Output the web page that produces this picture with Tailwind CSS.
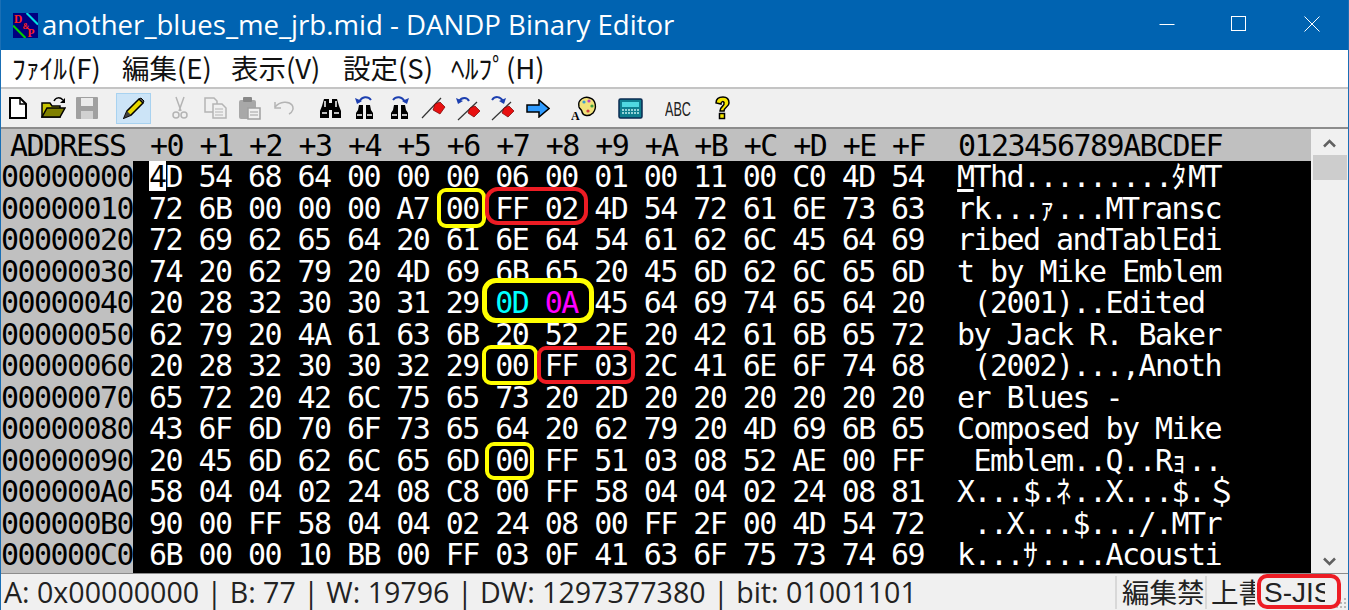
<!DOCTYPE html>
<html lang="ja">
<head>
    <meta charset="UTF-8">
    <meta name="viewport" content="width=device-width, initial-scale=1.0">
    <title>DANDP Binary Editor</title>
    <script src="https://cdn.jsdelivr.net/npm/@tailwindcss/browser@4"></script>
</head>
<body class="w-[1349px] h-[610px] overflow-hidden bg-[#f0f0f0]">
<div class="relative w-[1349px] h-[610px] flex flex-col border-x border-[#1a6fb5] overflow-hidden">

    <!-- title bar -->
    <div class="h-[50px] shrink-0 bg-[#0063b1] flex items-center text-white pl-[12px]">
        <svg class="w-[25px] h-[25px] shrink-0" viewBox="0 0 24 24">
            <rect width="24" height="24" fill="#000080"/>
            <path d="M13 0 L24 11" stroke="#00e0e0" stroke-width="2"/>
            <path d="M0 12 L12 24" stroke="#00d000" stroke-width="2"/>
            <text x="1" y="10" font-size="11" font-weight="bold" fill="#ff2020" font-family="Liberation Serif">D</text>
            <text x="9" y="15" font-size="8" font-weight="bold" fill="#ff2020" font-family="Liberation Serif">&amp;</text>
            <text x="14" y="23" font-size="11" font-weight="bold" fill="#ff2020" font-family="Liberation Serif">P</text>
        </svg>
        <span class="ml-[4px] text-[27.6px] leading-none font-['Open_Sans',sans-serif] whitespace-pre">another_blues_me_jrb.mid - DANDP Binary Editor</span>
        <div class="ml-auto mb-[2px] flex items-center">
            <svg class="w-[16px] h-[16px]" viewBox="0 0 16 16"><path d="M0.5 8.5H15.5" stroke="white" stroke-width="1"/></svg>
            <svg class="ml-[56px] w-[16px] h-[16px]" viewBox="0 0 16 16"><rect x="0.5" y="0.5" width="14" height="14" fill="none" stroke="white"/></svg>
            <svg class="ml-[57px] mr-[28px] w-[16px] h-[16px]" viewBox="0 0 16 16"><path d="M0.5 0.5L15.5 15.5M15.5 0.5L0.5 15.5" stroke="white"/></svg>
        </div>
    </div>

    <!-- menu -->
    <div class="h-[37px] shrink-0 bg-white flex items-center pb-[2px] text-[27.5px] text-[#111] font-['Noto_Sans_CJK_JP',sans-serif] whitespace-pre leading-none">
        <span class="w-[121px] pl-[11px]">ﾌｧｲﾙ(F)</span>
        <span class="w-[109px]">編集(E)</span>
        <span class="w-[112px]">表示(V)</span>
        <span class="w-[108px]">設定(S)</span>
        <span>ﾍﾙﾌﾟ(H)</span>
    </div>

    <!-- toolbar -->
    <div class="h-[42px] shrink-0 bg-[#f0f0f0] border-t-2 border-b-2 border-t-[#c4c4c4] border-b-[#8c8c8c] flex items-center">
        <svg class="ml-[7px] w-[20px] h-[24px]" viewBox="0 0 20 24"><path d="M2 2H12L18 8V22H2Z" fill="white" stroke="black" stroke-width="2"/><path d="M12 2V8H18" fill="none" stroke="black" stroke-width="1.5"/></svg>
        <svg class="ml-[13px] w-[25px] h-[24px]" viewBox="0 0 25 24"><path d="M1 7H9L11 10H19V21H1Z" fill="#c8c400" stroke="black" stroke-width="1.5"/><path d="M1 21L6 12H24L19 21Z" fill="#808000" stroke="black" stroke-width="1.5"/><path d="M13 5C15 1 19 1 22 4" fill="none" stroke="black" stroke-width="1.5"/><path d="M24 2V7H19Z" fill="black"/></svg>
        <svg class="ml-[10px] w-[22px] h-[22px]" viewBox="0 0 22 22"><rect x="0" y="0" width="22" height="22" rx="1" fill="#a0a0a0"/><rect x="5" y="1" width="12" height="8" fill="#ebebeb"/><rect x="5" y="14" width="12" height="8" fill="#d0d0d0"/></svg>
        <div class="ml-[18px] w-[35px] h-[31px] bg-[#cce4f7] border border-[#a8d2f0] flex items-center justify-center">
            <svg class="w-[22px] h-[22px]" viewBox="0 0 22 22"><path d="M1 21L4 14L16 2L20 6L8 18Z" fill="#e8d800" stroke="black" stroke-width="1.5"/><path d="M16 2L20 6L21 4L18 1Z" fill="#505050" stroke="black"/><path d="M1 21L4 14L8 18Z" fill="#404040"/></svg>
        </div>
        <svg class="ml-[21px] w-[16px] h-[24px]" viewBox="0 0 16 24" fill="none" stroke="#b4b4b4" stroke-width="1.5"><path d="M4 1L9 15M12 1L7 15"/><circle cx="4" cy="19" r="3"/><circle cx="12" cy="19" r="3"/></svg>
        <svg class="ml-[16px] w-[23px] h-[22px]" viewBox="0 0 23 22" fill="#f0f0f0" stroke="#b4b4b4" stroke-width="1.5"><path d="M1 1H10L13 4V15H1Z"/><path d="M9 7H18L22 11V21H9Z"/><path d="M11 12H19M11 15H19M11 18H19" stroke-width="1"/></svg>
        <svg class="ml-[11px] w-[23px] h-[23px]" viewBox="0 0 23 23"><rect x="1" y="3" width="17" height="19" rx="2" fill="#a8a8a8"/><rect x="5" y="0" width="9" height="5" rx="1" fill="#888"/><path d="M10 11H22V22H10Z" fill="#f0f0f0" stroke="#a0a0a0" stroke-width="1.5"/><path d="M12 15H20M12 18H20" stroke="#a0a0a0"/></svg>
        <svg class="ml-[13px] w-[20px] h-[14px]" viewBox="0 0 20 14" fill="none" stroke="#b4b4b4" stroke-width="1.5"><path d="M1 6C6 0 15 0 18 4C20 7 19 11 15 13"/><path d="M1 1V7H7"/></svg>
        <svg class="ml-[25px] w-[23px] h-[21px]" viewBox="0 0 23 21"><path d="M3 8L5 1H10V20H1V13Z" fill="black"/><path d="M20 8L18 1H13V20H22V13Z" fill="black"/><rect x="9" y="5" width="5" height="7" fill="black"/><path d="M3 15H8M15 15H20M6 3V9M17 3V9" stroke="white" stroke-width="1.5"/></svg>
        <svg class="ml-[12px] w-[21px] h-[24px]" viewBox="0 0 21 24"><path d="M5 6C8 0 14 0 17 4" fill="none" stroke="#1c3fb0" stroke-width="2"/><path d="M1 2L3 8L8 5Z" fill="#1c3fb0"/><path d="M4 14L5 9H9V23H2V17Z" fill="black"/><path d="M17 14L16 9H12V23H19V17Z" fill="black"/><path d="M3 19H8M13 19H18" stroke="white" stroke-width="1.5"/></svg>
        <svg class="ml-[14px] w-[21px] h-[24px]" viewBox="0 0 21 24"><path d="M4 4C7 0 13 0 16 6" fill="none" stroke="#1c3fb0" stroke-width="2"/><path d="M20 2L18 8L13 5Z" fill="#1c3fb0"/><path d="M4 14L5 9H9V23H2V17Z" fill="black"/><path d="M17 14L16 9H12V23H19V17Z" fill="black"/><path d="M3 19H8M13 19H18" stroke="white" stroke-width="1.5"/></svg>
        <svg class="ml-[11px] w-[25px] h-[22px]" viewBox="0 0 25 22"><path d="M1 21L20 1" stroke="#333" stroke-width="1.2"/><path d="M14 7L19 5L24 10L19 17L12 13Z" fill="#e81010" stroke="#700" stroke-width="0.7"/></svg>
        <svg class="ml-[10px] w-[25px] h-[25px]" viewBox="0 0 25 25"><path d="M2 24L21 6" stroke="#333" stroke-width="1.2"/><path d="M3 5C6 1 11 1 13 5" fill="none" stroke="#1c3fb0" stroke-width="2"/><path d="M0 2L2 8L7 5Z" fill="#1c3fb0"/><path d="M14 12L19 10L24 15L18 21L12 17Z" fill="#e81010" stroke="#700" stroke-width="0.7"/></svg>
        <svg class="ml-[9px] w-[25px] h-[25px]" viewBox="0 0 25 25"><path d="M2 24L21 6" stroke="#333" stroke-width="1.2"/><path d="M2 4C5 0 10 0 13 5" fill="none" stroke="#1c3fb0" stroke-width="2"/><path d="M16 2L14 8L9 5Z" fill="#1c3fb0"/><path d="M14 12L19 10L24 15L18 21L12 17Z" fill="#e81010" stroke="#700" stroke-width="0.7"/></svg>
        <svg class="ml-[11px] w-[24px] h-[19px]" viewBox="0 0 24 19"><path d="M1 6H13V1L23 9.500L13 18V13H1Z" fill="#2f9bff" stroke="black" stroke-width="1.5"/></svg>
        <svg class="ml-[21px] w-[26px] h-[26px]" viewBox="0 0 26 26"><path d="M8 12C6 4 14 1 19 3C25 5 26 13 22 18C18 22 12 21 11 17C11 14 9 15 8 12Z" fill="#f2e27a" stroke="black" stroke-width="1.4"/><circle cx="13" cy="7" r="1.600" fill="#3aa0d0"/><circle cx="18" cy="6" r="1.600" fill="#c040c0"/><circle cx="21" cy="11" r="1.600" fill="#40a040"/><circle cx="17" cy="16" r="1.600" fill="#d04040"/><text x="0" y="25" font-size="12" font-weight="bold" fill="black" font-family="Liberation Serif">A</text></svg>
        <svg class="ml-[21px] w-[25px] h-[21px]" viewBox="0 0 25 21"><rect x="1" y="1" width="23" height="19" rx="1.500" fill="#0f7f8f" stroke="#0a2a50" stroke-width="1.5"/><rect x="4" y="4" width="17" height="5" fill="#50d8e0"/><path d="M4 12H21M4 15H21" stroke="#c0f0f0" stroke-width="1.500" stroke-dasharray="2 1"/></svg>
        <span class="ml-[22px] w-[26px] text-[21px] leading-none text-[#222] font-['Liberation_Sans',sans-serif] scale-x-[0.6] origin-left whitespace-pre">ABC</span>
        <svg class="ml-[23px] w-[17px] h-[24px]" viewBox="0 0 17 24"><path d="M2 7C2 2 6 1 9 1C13 1 15 3 15 7C15 11 10 11 10 15H6C6 10 11 10 10 7C10 5 7 5 7 8Z" fill="#f5e500" stroke="black" stroke-width="1.500"/><rect x="5.500" y="17.500" width="5" height="5" fill="#f5e500" stroke="black" stroke-width="1.500"/></svg>
    </div>

    <!-- hex view -->
    <div class="flex-1 min-h-0 flex font-['DejaVu_Sans_Mono','Noto_Sans_CJK_JP',monospace] text-[30px] tracking-[-1.57px] whitespace-pre leading-[31.5px] border-b border-[#8c8c8c]">
        <div class="flex-1 min-w-0 flex flex-col overflow-hidden">
            <div class="h-[32px] shrink-0 bg-[#c0c0c0] text-black pl-[9px] leading-[33px]"><span class="inline-block w-[140px]">ADDRESS</span>+0 +1 +2 +3 +4 +5 +6 +7 +8 +9 +A +B +C +D +E +F  0123456789ABCDEF</div>
            <div class="flex-1 flex min-h-0">
                <div class="w-[132px] shrink-0 bg-[#c0c0c0] text-black flex flex-col">
                    <div class="h-[31.5px]">00000000</div>
                    <div class="h-[31.5px]">00000010</div>
                    <div class="h-[31.5px]">00000020</div>
                    <div class="h-[31.5px]">00000030</div>
                    <div class="h-[31.5px]">00000040</div>
                    <div class="h-[31.5px]">00000050</div>
                    <div class="h-[31.5px]">00000060</div>
                    <div class="h-[31.5px]">00000070</div>
                    <div class="h-[31.5px]">00000080</div>
                    <div class="h-[31.5px]">00000090</div>
                    <div class="h-[31.5px]">000000A0</div>
                    <div class="h-[31.5px]">000000B0</div>
                    <div class="h-[31.5px]">000000C0</div>
                </div>
                <div class="flex-1 bg-black text-white pl-[16px] flex flex-col">
                    <div class="h-[31.5px]"><span class="inline-block h-[30px] leading-[31px] bg-white text-black">4</span>D 54 68 64 00 00 00 06 00 01 00 11 00 C0 4D 54  <span class="underline">M</span>Thd.........<span class="inline-block w-[16.49px]">ﾀ</span>MT</div>
                    <div class="h-[31.5px]">72 6B 00 00 00 A7 00 FF 02 4D 54 72 61 6E 73 63  rk...<span class="inline-block w-[16.49px]">ｧ</span>...MTransc</div>
                    <div class="h-[31.5px]">72 69 62 65 64 20 61 6E 64 54 61 62 6C 45 64 69  ribed andTablEdi</div>
                    <div class="h-[31.5px]">74 20 62 79 20 4D 69 6B 65 20 45 6D 62 6C 65 6D  t by Mike Emblem</div>
                    <div class="h-[31.5px]">20 28 32 30 30 31 29 <span class="text-[#00ffff]">0D</span> <span class="text-[#ff00ff]">0A</span> 45 64 69 74 65 64 20   (2001)..Edited</div>
                    <div class="h-[31.5px]">62 79 20 4A 61 63 6B 20 52 2E 20 42 61 6B 65 72  by Jack R. Baker</div>
                    <div class="h-[31.5px]">20 28 32 30 30 32 29 00 FF 03 2C 41 6E 6F 74 68   (2002)...,Anoth</div>
                    <div class="h-[31.5px]">65 72 20 42 6C 75 65 73 20 2D 20 20 20 20 20 20  er Blues -</div>
                    <div class="h-[31.5px]">43 6F 6D 70 6F 73 65 64 20 62 79 20 4D 69 6B 65  Composed by Mike</div>
                    <div class="h-[31.5px]">20 45 6D 62 6C 65 6D 00 FF 51 03 08 52 AE 00 FF   Emblem..Q..R<span class="inline-block w-[16.49px]">ｮ</span>..</div>
                    <div class="h-[31.5px]">58 04 04 02 24 08 C8 00 FF 58 04 04 02 24 08 81  X...$.<span class="inline-block w-[16.49px]">ﾈ</span>..X...$.<span class="inline-block w-[33px] text-center">＄</span></div>
                    <div class="h-[31.5px]">90 00 FF 58 04 04 02 24 08 00 FF 2F 00 4D 54 72   ..X...$.../.MTr</div>
                    <div class="h-[31.5px]">6B 00 00 10 BB 00 FF 03 0F 41 63 6F 75 73 74 69  k...<span class="inline-block w-[16.49px]">ｻ</span>....Acousti</div>
                </div>
            </div>
        </div>
        <!-- scrollbar -->
        <div class="w-[37px] shrink-0 bg-[#f0f0f0] flex flex-col items-center">
            <svg class="mt-[10px] w-[13px] h-[9px]" viewBox="0 0 13 9"><path d="M1 7.500L6.500 2L12 7.500" fill="none" stroke="#606060" stroke-width="2.500"/></svg>
            <div class="mt-[7px] w-[34px] h-[25px] bg-[#cdcdcd]"></div>
            <svg class="mt-auto mb-[7px] w-[13px] h-[9px]" viewBox="0 0 13 9"><path d="M1 1.500L6.500 7L12 1.500" fill="none" stroke="#606060" stroke-width="2.500"/></svg>
        </div>
    </div>

    <!-- status bar -->
    <div class="relative h-[36px] shrink-0 bg-[#f0f0f0] flex items-center text-[28.6px] text-[#222] leading-none whitespace-pre font-['Open_Sans','Noto_Sans_CJK_JP',sans-serif]">
        <span class="pl-[3px] w-[1114px]">A: 0x00000000 | B: 77 | W: 19796 | DW: 1297377380 | bit: 01001101</span>
        <span class="w-[90px] h-[33px] leading-[33px] border-l-2 border-[#d8d8d8] overflow-hidden pl-[5px] text-[27.5px]">編集禁止</span>
        <span class="w-[50px] h-[33px] leading-[33px] border-l-2 border-[#d8d8d8] overflow-hidden pl-[4px] text-[27.5px]">上書き</span>
        <span class="w-[70px] h-[33px] leading-[33px] overflow-hidden pl-[9px] text-[28px] font-['Liberation_Sans',sans-serif]">S-JIS</span>
        <svg class="absolute right-0 bottom-0 w-[12px] h-[12px]" viewBox="0 0 12 12" fill="#b8b8b8"><rect x="8" y="0" width="2" height="2"/><rect x="8" y="4" width="2" height="2"/><rect x="4" y="4" width="2" height="2"/><rect x="8" y="8" width="2" height="2"/><rect x="4" y="8" width="2" height="2"/><rect x="0" y="8" width="2" height="2"/></svg>
    </div>

    <!-- hand drawn marks on the screenshot -->
    <div class="absolute left-[436px] top-[188px] w-[49px] h-[40px] border-[4px] border-[#ffff00] rounded-[9px]"></div>
    <div class="absolute left-[484px] top-[187px] w-[103px] h-[38px] border-[4px] border-[#ed1c24] rounded-[13px]"></div>
    <div class="absolute left-[481px] top-[278px] w-[112px] h-[45px] border-[5px] border-[#ffff00] rounded-[14px]"></div>
    <div class="absolute left-[481px] top-[345px] w-[56px] h-[40px] border-[4px] border-[#ffff00] rounded-[9px]"></div>
    <div class="absolute left-[536px] top-[346px] w-[98px] h-[38px] border-[4px] border-[#ed1c24] rounded-[9px]"></div>
    <div class="absolute left-[484px] top-[442px] w-[49px] h-[38px] border-[4px] border-[#ffff00] rounded-[9px]"></div>
    <div class="absolute left-[1256px] top-[574px] w-[84px] h-[35px] border-[4px] border-[#ed1c24] rounded-[10px]"></div>
</div>
</body>
</html>
